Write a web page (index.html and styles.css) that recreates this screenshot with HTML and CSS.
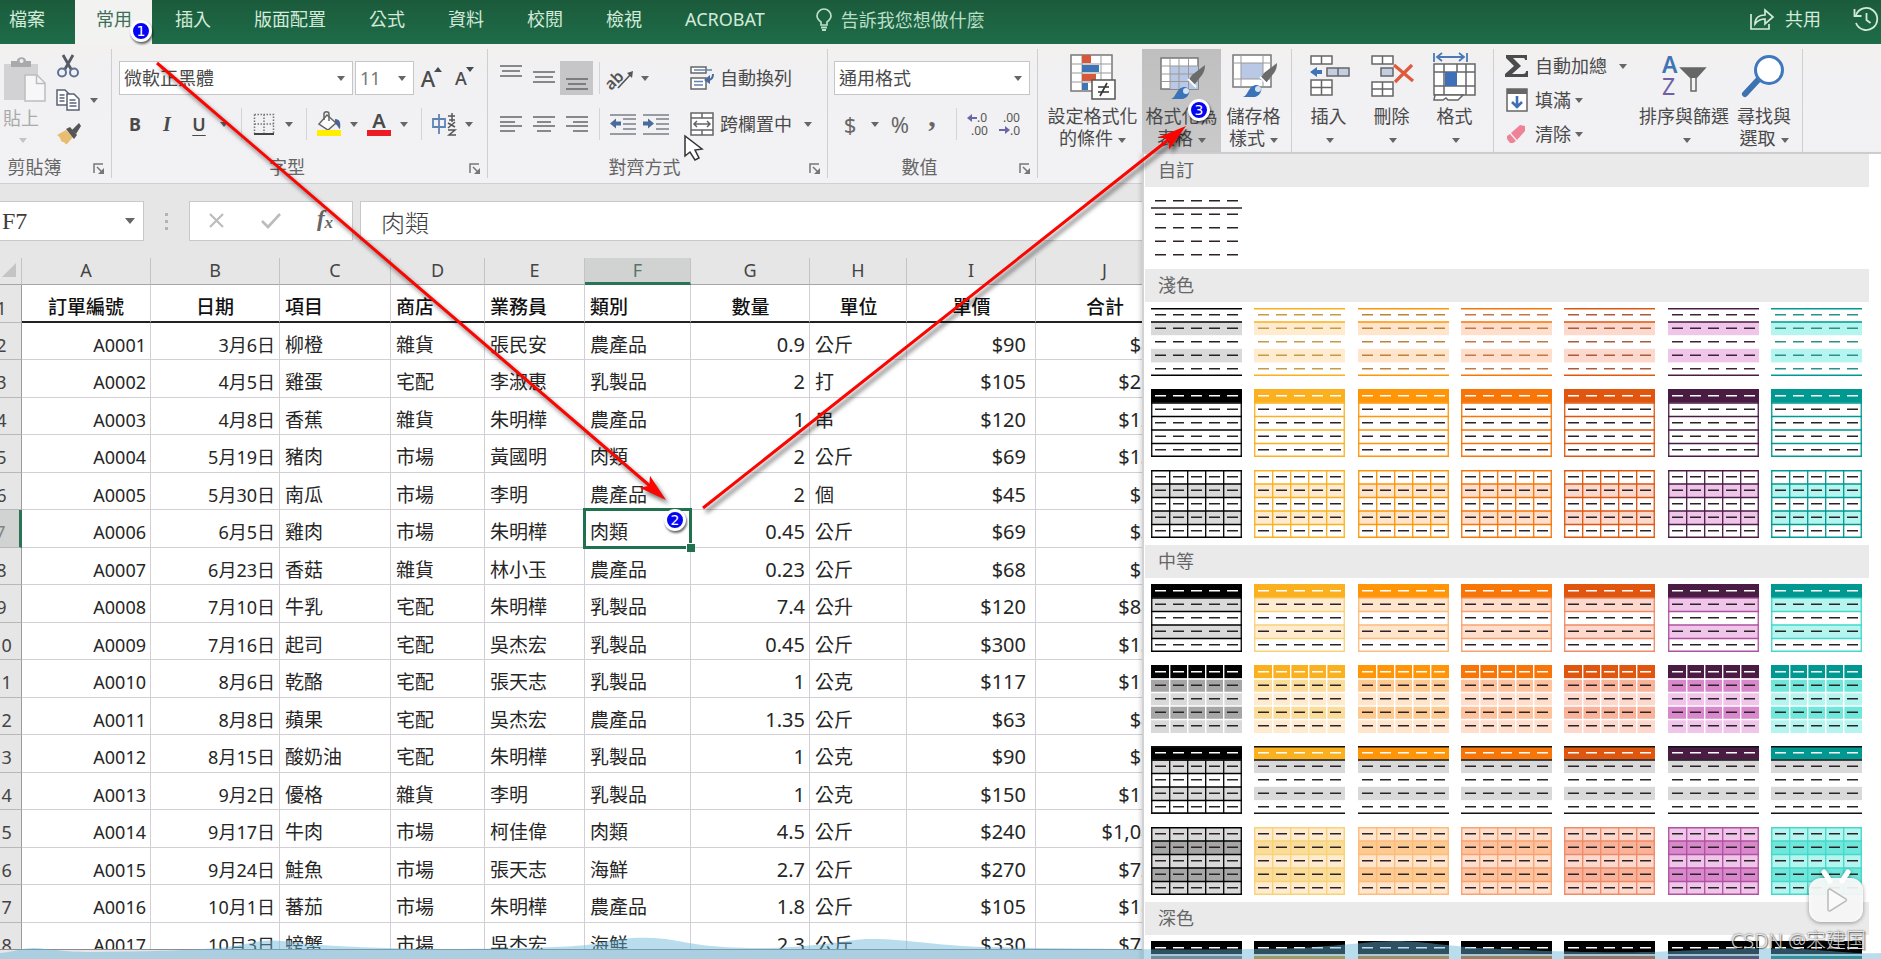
FILE: index.html
```html
<!DOCTYPE html>
<html lang="zh-Hant">
<head>
<meta charset="utf-8">
<title>格式化為表格</title>
<link rel="stylesheet" href="styles.css">
</head>
<body>
<header class="tabs">
  <nav class="tab-list" aria-label="功能區">
    <button class="tab file">檔案</button>
    <button class="tab active">常用</button>
    <button class="tab">插入</button>
    <button class="tab">版面配置</button>
    <button class="tab">公式</button>
    <button class="tab">資料</button>
    <button class="tab">校閱</button>
    <button class="tab">檢視</button>
    <button class="tab">ACROBAT</button>
  </nav>
  <button class="tell">
    <svg width="18" height="24" viewBox="0 0 18 24" fill="none" stroke="currentColor" stroke-width="1.7"><path d="M6 17v-3C3.500 12 2 10.500 2 8a7 7 0 0 1 14 0c0 2.500-1.500 4-4 6v3z"/><path d="M6 19.500h6M7 22h4" stroke-width="2"/></svg>
    告訴我您想做什麼</button>
  <button class="share">
    <svg width="26" height="24" viewBox="0 0 26 24" fill="none" stroke="currentColor" stroke-width="1.7"><path d="M2 7v15h18v-5"/><path d="M6 17c0-7 5-9 10-9V3l8 7-8 7v-5c-4 0-7 1-10 5z"/></svg>
    共用</button>
  <button class="history" aria-label="版本記錄">
    <svg width="26" height="26" viewBox="0 0 26 26" fill="none" stroke="currentColor" stroke-width="1.8"><path d="M3 9A11 11 0 1 1 3 17" /><path d="M1.500 3v7h7M13.500 7v7l4 3"/></svg>
  </button>
</header>

<div class="ribbon">
  <section class="group clipboard">
    <div class="content">
      <button class="paste">
        <svg width="46" height="50" viewBox="0 0 46 50"><path d="M4 8h34v16H26v20H4z" fill="#d2d1d3"/><path d="M11 5h6c0-5 9-5 9 0h5v6H11z" fill="#a9a8aa"/><circle cx="21.500" cy="5" r="2" fill="#f1f0f1"/><path d="M25 19h12l8 8v18H25z" fill="#f7f7f8" stroke="#bdbcbe" stroke-width="1.500"/><path d="M36.500 19v8.500H45" fill="none" stroke="#bdbcbe" stroke-width="1.500"/></svg>
        <span>貼上</span><i class="caret"></i>
      </button>
      <div class="stack">
        <button class="line" aria-label="剪下"><svg width="24" height="24" viewBox="0 0 24 24" fill="none"><path d="M7 1l8.500 15M17 1L8.500 16" stroke="#555b66" stroke-width="2.800"/><circle cx="6" cy="18.500" r="4" stroke="#5d7396" stroke-width="2"/><circle cx="18" cy="18.500" r="4" stroke="#5d7396" stroke-width="2"/></svg></button>
        <button class="line" aria-label="複製"><svg width="24" height="24" viewBox="0 0 24 24" fill="#fff" stroke="#596273" stroke-width="1.500"><path d="M1 2h8l4 4v11H1z"/><path d="M3.500 7h5M3.500 10h5M3.500 13h5"/><path d="M11 6h7l5 5v11H11z"/><path d="M13.500 12h6M13.500 15h7M13.500 18h7" /></svg><i class="caret gap"></i></button>
        <button class="line" aria-label="複製格式"><svg width="26" height="24" viewBox="0 0 26 24"><path d="M1 13l9-5 7 7-6 7c-2 1-2-2-4-2-3 0-1-4-6-7z" fill="#e9bd70"/><path d="M10 7l4-2 7 8-3 4z" fill="#555"/><path d="M16 8l7-7 2 3-5 8z" fill="#555"/></svg></button>
      </div>
    </div>
    <footer><span>剪貼簿</span><button class="launch" aria-label="剪貼簿選項"><svg width="12" height="12" viewBox="0 0 12 12"><path d="M1 10V1h9M4 4l6 6" fill="none" stroke="#777" stroke-width="1.500"/><path d="M11 5v6H5z" fill="#777"/></svg></button></footer>
  </section>

  <section class="group font">
    <div class="content rows">
      <div class="row">
        <label class="combo family"><select aria-label="字型"><option>微軟正黑體</option></select></label>
        <label class="combo size"><select aria-label="字型大小"><option>11</option></select></label>
        <button class="tool first grow" aria-label="放大字型">A<svg width="8" height="5" viewBox="0 0 8 5"><path d="M0 5l4-5 4 5z" fill="#444b57"/></svg></button>
        <button class="tool shrink" aria-label="縮小字型">A<svg width="8" height="5" viewBox="0 0 8 5"><path d="M0 0h8L4 5z" fill="#444b57"/></svg></button>
      </div>
      <div class="row">
        <button class="tool bold">B</button><button class="tool italic">I</button><button class="tool under">U</button><button class="drop" aria-label="底線選項"><i class="caret"></i></button>
        <span class="sep"></span>
        <button class="tool" aria-label="框線"><svg width="22" height="22" viewBox="0 0 22 22" fill="none" stroke="#777"><path d="M1.500 1.500h19v19M1.500 1.500v19M11 1.500v19M1.500 11h19" stroke-width="1.500" stroke-dasharray="1.500 1.500"/><path d="M1 21h20" stroke="#444" stroke-width="2"/></svg></button><button class="drop" aria-label="框線選項"><i class="caret"></i></button>
        <span class="sep"></span>
        <button class="tool" aria-label="填滿色彩"><svg width="26" height="26" viewBox="0 0 26 26"><path d="M11 4l9 8-8 7-9-6z" fill="#fff" stroke="#666" stroke-width="1.500"/><path d="M8 9V3c0-3 5-3 5 0v7" fill="none" stroke="#666" stroke-width="1.500"/><path d="M19 8c5 0 6 4 5 10-2-1-2-4-5-5z" fill="#4a6494"/><path d="M1 19h24v6H1z" fill="#ffee00"/></svg></button><button class="drop" aria-label="填滿色彩選項"><i class="caret"></i></button>
        <button class="tool color" aria-label="字型色彩">A</button><button class="drop" aria-label="字型色彩選項"><i class="caret"></i></button>
        <span class="sep"></span>
        <button class="tool" aria-label="注音標示"><svg width="26" height="24" viewBox="0 0 26 24" fill="none"><path d="M2 7h12v8H2zM8 2v20" stroke="#5f83b4" stroke-width="1.800"/><path d="M17 4h7M18 8h6M21 1v9M17 11l7 4M24 10l-7 6M17 18h7l-6 5h7" stroke="#555" stroke-width="1.500"/></svg></button><button class="drop" aria-label="注音選項"><i class="caret"></i></button>
      </div>
    </div>
    <footer><span>字型</span><button class="launch" aria-label="字型選項"><svg width="12" height="12" viewBox="0 0 12 12"><path d="M1 10V1h9M4 4l6 6" fill="none" stroke="#777" stroke-width="1.500"/><path d="M11 5v6H5z" fill="#777"/></svg></button></footer>
  </section>

  <section class="group align">
    <div class="content">
      <div class="rows aligners">
        <div class="row">
          <button class="tool wide" aria-label="靠上對齊"><svg width="22" height="34"><path d="M0 5h22M2 10h18M0 15h22" stroke="#666" stroke-width="1.500"/></svg></button>
          <button class="tool wide" aria-label="置中對齊"><svg width="22" height="34"><path d="M0 11h22M2 16h18M0 21h22" stroke="#666" stroke-width="1.500"/></svg></button>
          <button class="tool wide on" aria-label="靠下對齊"><svg width="22" height="34"><path d="M0 18h22M2 23h18M0 28h22" stroke="#666" stroke-width="1.500"/></svg></button>
          <span class="sep"></span>
          <button class="tool slant" aria-label="方向"><svg width="26" height="26" viewBox="0 0 26 26"><text x="-4" y="19" transform="rotate(-45 8 14)" font-family="Noto Sans" font-size="16" font-weight="600" fill="#555">ab</text><path d="M10 23L23 9" stroke="#555" stroke-width="1.600"/><path d="M25 6l-1 7-5-5z" fill="#555"/></svg></button><button class="drop" aria-label="方向選項"><i class="caret"></i></button>
        </div>
        <div class="row">
          <button class="tool wide" aria-label="靠左"><svg width="22" height="18"><path d="M0 2h22M0 7h15M0 11h22M0 16h15" stroke="#666" stroke-width="1.500"/></svg></button>
          <button class="tool wide" aria-label="置中"><svg width="22" height="18"><path d="M0 2h22M4 7h14M0 11h22M4 16h14" stroke="#666" stroke-width="1.500"/></svg></button>
          <button class="tool wide" aria-label="靠右"><svg width="22" height="18"><path d="M0 2h22M7 7h15M0 11h22M7 16h15" stroke="#666" stroke-width="1.500"/></svg></button>
          <span class="sep"></span>
          <button class="tool wide" aria-label="減少縮排"><svg width="26" height="22"><path d="M0 2h26M13 6h13M13 11h13M13 16h13M0 21h26" stroke="#7a7f88" stroke-width="1.500"/><path d="M0 10.500l6-5v3h5v4H6v3z" fill="#4a6c9c"/></svg></button>
          <button class="tool wide" aria-label="增加縮排"><svg width="26" height="22"><path d="M0 2h26M13 6h13M13 11h13M13 16h13M0 21h26" stroke="#7a7f88" stroke-width="1.500"/><path d="M11 10.500l-6-5v3H0v4h5v3z" fill="#4a6c9c"/></svg></button>
        </div>
      </div>
      <div class="rows merges">
        <button class="line"><svg width="24" height="24" viewBox="0 0 24 24" fill="none"><path d="M1 1h15v6H1zM1 12h15v11H1z" stroke="#666" stroke-width="1.500" fill="#fff"/><path d="M4 4h18M4 15.500h9M4 19h9" stroke="#5e82b2" stroke-width="1.600"/><path d="M23 8c0 4-2 6-5 6" stroke="#4a6c9c" stroke-width="2"/><path d="M14 14l6-5v9z" fill="#4a6c9c"/></svg><span>自動換列</span></button>
        <button class="line"><svg width="24" height="24" viewBox="0 0 24 24" fill="#fff" stroke="#666" stroke-width="1.500"><path d="M1 1h22v22H1zM1 6h22M1 18h22M12 1v5M12 18v5"/><path d="M4 12h16M7 9l-3 3 3 3M17 9l3 3-3 3" fill="none"/></svg><span>跨欄置中</span><i class="caret gap"></i></button>
      </div>
    </div>
    <footer><span>對齊方式</span><button class="launch" aria-label="對齊選項"><svg width="12" height="12" viewBox="0 0 12 12"><path d="M1 10V1h9M4 4l6 6" fill="none" stroke="#777" stroke-width="1.500"/><path d="M11 5v6H5z" fill="#777"/></svg></button></footer>
  </section>

  <section class="group number">
    <div class="content rows">
      <div class="row"><label class="combo format"><select aria-label="數值格式"><option>通用格式</option></select></label></div>
      <div class="row">
        <button class="tool sign">$</button><button class="drop" aria-label="會計格式"><i class="caret"></i></button>
        <button class="tool sign">%</button><button class="tool comma">,</button>
        <span class="sep"></span>
        <button class="tool decimal" aria-label="增加小數位數"><svg width="24" height="22" viewBox="0 0 24 22"><path d="M0 5l5-4v3h5v2H5v3z" fill="#6a66a8"/><text x="10" y="9" font-size="12">.0</text><text x="4" y="22" font-size="12">.00</text></svg></button>
        <button class="tool decimal" aria-label="減少小數位數"><svg width="24" height="22" viewBox="0 0 24 22"><path d="M11 17l-5-4v3H0v2h6v3z" fill="#6a66a8"/><text x="4" y="9" font-size="12">.00</text><text x="11" y="22" font-size="12">.0</text></svg></button>
      </div>
    </div>
    <footer><span>數值</span><button class="launch" aria-label="數值選項"><svg width="12" height="12" viewBox="0 0 12 12"><path d="M1 10V1h9M4 4l6 6" fill="none" stroke="#777" stroke-width="1.500"/><path d="M11 5v6H5z" fill="#777"/></svg></button></footer>
  </section>

  <section class="group styles">
    <button class="big conditional">
      <svg width="46" height="46" viewBox="0 0 46 46"><path d="M1 1h41v36H1z" fill="#fff" stroke="#777" stroke-width="1.500"/><path d="M12 1v36M31 1v36M1 10h41M1 19h41M1 28h41" stroke="#999"/><path d="M12 1h9v8h-9z" fill="#d8583a"/><path d="M12 11h17v7H12z" fill="#3f74b5"/><path d="M12 20h14v7H12z" fill="#d8583a"/><path d="M12 29h6v7h-6z" fill="#3f74b5"/><path d="M22 26h23v19H22z" fill="#fff" stroke="#555" stroke-width="1.500"/><path d="M28 33h11M28 38h11M37 29l-7 13" stroke="#333" stroke-width="1.600"/></svg>
      <span>設定格式化</span><span>的條件<i class="caret"></i></span></button>
    <button class="big table pressed">
      <svg width="46" height="46" viewBox="0 0 46 46"><path d="M2 4h37v31H2z" fill="#fff" stroke="#777" stroke-width="1.500"/><path d="M11 12h28v23H11z" fill="#b9c8e4"/><path d="M11 4v31M20 4v31M29.500 4v31M2 12h37M2 20h37M2 27.500h37" stroke="#999"/><path d="M29 27l4-6 13-10c0 4-1 7-3 10l-8 10z" fill="#6b6b6b"/><path d="M29 25l8 8" stroke="#fff" stroke-width="2"/><path d="M12 45c6-2 5-12 14-12 7 1 5 10-2 12z" fill="#3b73b9"/><circle cx="27" cy="37" r="3" fill="#d5e2f3"/></svg>
      <span>格式化為</span><span>表格<i class="caret"></i></span></button>
    <button class="big cell">
      <svg width="46" height="46" viewBox="0 0 46 46"><path d="M2 1h38v32H2z" fill="#fff" stroke="#777" stroke-width="1.500"/><path d="M10 9h22v16H10z" fill="#b9c8e4"/><path d="M10 1v32M32 1v32M2 9h38M2 25h38" stroke="#999"/><path d="M29 25l4-6 13-10c0 4-1 7-3 10l-8 10z" fill="#6b6b6b"/><path d="M29 23l8 8" stroke="#fff" stroke-width="2"/><path d="M12 43c6-2 5-12 14-12 7 1 5 10-2 12z" fill="#3b73b9"/><circle cx="27" cy="35" r="3" fill="#d5e2f3"/></svg>
      <span>儲存格</span><span>樣式<i class="caret"></i></span></button>
  </section>

  <section class="group cells">
    <button class="big">
      <svg width="44" height="46" viewBox="0 0 44 46" fill="#fff" stroke="#666" stroke-width="1.500"><path d="M4 2h21v8H4zM14.500 2v8M4 26h21v15H4zM14.500 26v15M4 33.500h21"/><path d="M20 14h22v8H20zM31 14v8" fill="#c3cee2"/><path d="M3 18l7-5v3h5v4h-5v3z" fill="#3f74b5" stroke="none"/></svg>
      <span>插入</span><span><i class="caret"></i></span></button>
    <button class="big">
      <svg width="48" height="46" viewBox="0 0 48 46" fill="#fff" stroke="#666" stroke-width="1.500"><path d="M4 2h21v8H4zM14.500 2v8M4 28h21v14H4zM14.500 28v14M4 35h21"/><path d="M13 14h12v8H13z" fill="#c3cee2"/><path d="M26 11l19 16M44 11L27 28" stroke="#dd5b3c" stroke-width="3.200" fill="none"/></svg>
      <span>刪除</span><span><i class="caret"></i></span></button>
    <button class="big">
      <svg width="46" height="50" viewBox="0 0 46 50" fill="#fff" stroke="#666" stroke-width="1.500"><path d="M2 12h41v31H2zM12 12v31M34 12v31M2 20h41M2 34h41M25 12v8"/><path d="M13 20h12v14H13z" fill="#3f6fb5" stroke="none"/><path d="M3 43h10l4 0h14l-5 5H16l-2-2-3 2H2z"/><path d="M2 1v9M35 1v9M5 5h27M10 1L5 5l5 4M27 1l5 4-5 4" fill="none" stroke="#4a79b5" stroke-width="1.800"/></svg>
      <span>格式</span><span><i class="caret"></i></span></button>
  </section>

  <section class="group editing">
    <div class="stack">
      <button class="line"><svg width="24" height="24" viewBox="0 0 24 24"><path d="M1 1h21v5h-2c0-2-1-2-3-2H8l8 8-9 8h11c2 0 3-1 3-3h2v6H0v-3l9-8-8-8z" fill="#4b4b4b"/></svg><span>自動加總</span><i class="caret gap"></i></button>
      <button class="line"><svg width="24" height="24" viewBox="0 0 24 24"><path d="M2 1h20v22H2z" fill="#fff" stroke="#666" stroke-width="1.500"/><path d="M2 1h20v5H2z" fill="#666"/><path d="M12 8v12M7 14l5 5 5-5" fill="none" stroke="#3f6fb5" stroke-width="2.600"/></svg><span>填滿</span><i class="caret"></i></button>
      <button class="line"><svg width="24" height="24" viewBox="0 0 24 24"><path d="M2 14l3-2 6 7-3 2H5l-3-4z" fill="#ee8296"/><path d="M6 11L15 3l5 1v5l-8 9z" fill="#ee8296"/></svg><span>清除</span><i class="caret"></i></button>
    </div>
    <button class="big sort">
      <svg width="46" height="46" viewBox="0 0 46 46"><text x="1" y="19" font-size="23" font-weight="600" fill="#3f74b5">A</text><text x="1" y="41" font-size="23" fill="#7060a5">Z</text><path d="M20 14h24l-9 10v13h-5V24z" fill="#f4f4f4" stroke="#666" stroke-width="1.500"/><path d="M20 14h24l-9 10h-5z" fill="#666"/></svg>
      <span>排序與篩選</span><span><i class="caret"></i></span></button>
    <button class="big find">
      <svg width="46" height="46" viewBox="0 0 46 46"><path d="M4 40l13-14" stroke="#3d72b0" stroke-width="6" stroke-linecap="round"/><circle cx="28" cy="16" r="13.500" fill="#fff" stroke="#3f78bd" stroke-width="3"/></svg>
      <span>尋找與</span><span>選取<i class="caret"></i></span></button>
  </section>
</div>

<div class="formula">
  <div class="name-box"><input value="F7" aria-label="名稱方塊"><i class="caret large"></i></div>
  <span class="grip"><i></i><i></i><i></i></span>
  <div class="actions">
    <button aria-label="取消"><svg width="18" height="16"><path d="M2 1l13 13M15 1L2 14" stroke="#bcbcbc" stroke-width="2.200"/></svg></button>
    <button aria-label="輸入"><svg width="20" height="16"><path d="M1 8l6 6L19 1" fill="none" stroke="#bcbcbc" stroke-width="2.600"/></svg></button>
    <button class="fx">f<sub>x</sub></button>
  </div>
  <input class="value" value="肉類" aria-label="資料編輯列">
</div>

<main class="sheet">
<table>
<colgroup><col class="w-n"><col class="w-a"><col class="w-a"><col class="w-c"><col class="w-d"><col class="w-e"><col class="w-f"><col class="w-g"><col class="w-h"><col class="w-a"><col class="w-j"></colgroup>
<thead><tr><th class="corner"><svg width="14" height="14"><path d="M14 0v14H0z" fill="#c4c4c4"/></svg></th><th>A</th><th>B</th><th>C</th><th>D</th><th>E</th><th class="picked">F</th><th>G</th><th>H</th><th>I</th><th>J</th></tr></thead>
<tbody>
<tr class="titles"><th>1</th><td>訂單編號</td><td>日期</td><td>項目</td><td>商店</td><td>業務員</td><td>類別</td><td>數量</td><td>單位</td><td>單價</td><td>合計</td></tr>
<tr><th>2</th><td>A0001</td><td>3月6日</td><td>柳橙</td><td>雜貨</td><td>張民安</td><td>農產品</td><td>0.9</td><td>公斤</td><td>$90</td><td>$81</td></tr>
<tr><th>3</th><td>A0002</td><td>4月5日</td><td>雞蛋</td><td>宅配</td><td>李淑惠</td><td>乳製品</td><td>2</td><td>打</td><td>$105</td><td>$210</td></tr>
<tr><th>4</th><td>A0003</td><td>4月8日</td><td>香蕉</td><td>雜貨</td><td>朱明樺</td><td>農產品</td><td>1</td><td>串</td><td>$120</td><td>$120</td></tr>
<tr><th>5</th><td>A0004</td><td>5月19日</td><td>豬肉</td><td>市場</td><td>黃國明</td><td>肉類</td><td>2</td><td>公斤</td><td>$69</td><td>$138</td></tr>
<tr><th>6</th><td>A0005</td><td>5月30日</td><td>南瓜</td><td>市場</td><td>李明</td><td>農產品</td><td>2</td><td>個</td><td>$45</td><td>$90</td></tr>
<tr><th class="picked">7</th><td>A0006</td><td>6月5日</td><td>雞肉</td><td>市場</td><td>朱明樺</td><td class="selected">肉類</td><td>0.45</td><td>公斤</td><td>$69</td><td>$31</td></tr>
<tr><th>8</th><td>A0007</td><td>6月23日</td><td>香菇</td><td>雜貨</td><td>林小玉</td><td>農產品</td><td>0.23</td><td>公斤</td><td>$68</td><td>$16</td></tr>
<tr><th>9</th><td>A0008</td><td>7月10日</td><td>牛乳</td><td>宅配</td><td>朱明樺</td><td>乳製品</td><td>7.4</td><td>公升</td><td>$120</td><td>$888</td></tr>
<tr><th>10</th><td>A0009</td><td>7月16日</td><td>起司</td><td>宅配</td><td>吳杰宏</td><td>乳製品</td><td>0.45</td><td>公斤</td><td>$300</td><td>$135</td></tr>
<tr><th>11</th><td>A0010</td><td>8月6日</td><td>乾酪</td><td>宅配</td><td>張天志</td><td>乳製品</td><td>1</td><td>公克</td><td>$117</td><td>$117</td></tr>
<tr><th>12</th><td>A0011</td><td>8月8日</td><td>蘋果</td><td>宅配</td><td>吳杰宏</td><td>農產品</td><td>1.35</td><td>公斤</td><td>$63</td><td>$85</td></tr>
<tr><th>13</th><td>A0012</td><td>8月15日</td><td>酸奶油</td><td>宅配</td><td>朱明樺</td><td>乳製品</td><td>1</td><td>公克</td><td>$90</td><td>$90</td></tr>
<tr><th>14</th><td>A0013</td><td>9月2日</td><td>優格</td><td>雜貨</td><td>李明</td><td>乳製品</td><td>1</td><td>公克</td><td>$150</td><td>$150</td></tr>
<tr><th>15</th><td>A0014</td><td>9月17日</td><td>牛肉</td><td>市場</td><td>柯佳偉</td><td>肉類</td><td>4.5</td><td>公斤</td><td>$240</td><td>$1,080</td></tr>
<tr><th>16</th><td>A0015</td><td>9月24日</td><td>鮭魚</td><td>市場</td><td>張天志</td><td>海鮮</td><td>2.7</td><td>公斤</td><td>$270</td><td>$729</td></tr>
<tr><th>17</th><td>A0016</td><td>10月1日</td><td>蕃茄</td><td>市場</td><td>朱明樺</td><td>農產品</td><td>1.8</td><td>公斤</td><td>$105</td><td>$189</td></tr>
<tr><th>18</th><td>A0017</td><td>10月3日</td><td>螃蟹</td><td>市場</td><td>吳杰宏</td><td>海鮮</td><td>2.3</td><td>公斤</td><td>$330</td><td>$759</td></tr>
</tbody>
</table>
</main>
<div class="status"></div>

<aside class="gallery" aria-label="表格樣式"></aside>

<svg class="wave" viewBox="0 0 1881 24" preserveAspectRatio="none" aria-hidden="true"><path d="M0 18C15 17 20 13 33 13S60 17 90 17C190 16 225 14 250 8C275 2 290 8 320 10S400 14 460 14C540 13 580 12 600 8C625 1 655 2 672 5S710 13 760 13S840 6 865 4C900 3 930 10 985 12C1090 14 1220 16 1300 13C1350 10 1370 6 1400 6C1440 8 1450 12 1500 14S1590 18 1650 17C1720 14 1760 12 1800 14S1850 19 1881 18V24H0Z"/></svg>

<svg class="marks" width="1240" height="560" viewBox="0 0 1240 560" aria-hidden="true">
  <path d="M685 136v20l5-4 5 8 4-2-4-8 7-1z" fill="#fff" stroke="#333" stroke-width="1.500"/>
  <g class="arrows">
    <path d="M157 63L650 486M703 508L1168 140" stroke="#fb0500" stroke-width="3"/>
    <path d="M0 0L-28 -8L-22 0L-28 8z" fill="#fb0500" transform="translate(666 500) rotate(40.600)"/>
    <path d="M0 0L-28 -8L-22 0L-28 8z" fill="#fb0500" transform="translate(1186 126) rotate(-38.400)"/>
  </g>
  <g class="pins">
    <circle cx="141" cy="31" r="9.500"/><text x="141" y="36">1</text>
    <circle cx="675" cy="520" r="9.500"/><text x="675" y="525">2</text>
    <circle cx="1199" cy="110" r="9.500"/><text x="1199" y="115">3</text>
  </g>
</svg>

<div class="brand">
  <svg width="60" height="56" viewBox="0 0 60 56"><path d="M18 3l6 9M42 3l-6 9" stroke="#fff" stroke-width="5" stroke-linecap="round"/><rect x="3" y="9" width="54" height="44" rx="12" fill="#fff" fill-opacity=".9"/><path d="M22 22v19c0 1 1 1 2 1l16-10c1-1 1-1 0-2L24 20c-1 0-2 0-2 2z" fill="#fafafa" stroke="#bbb" stroke-width="1.500"/></svg>
  <p>CSDN @宋建国</p>
</div>
<script src="gallery.js"></script>
</body>
</html>
```
FILE: styles.css
```css
* { box-sizing: border-box; }
body {
  margin: 0;
  height: 100vh;
  display: flex;
  flex-direction: column;
  overflow: hidden;
  position: relative;
  background: #e6e6e7;
  color: #4a4a4a;
  font: 18px/22px "Noto Sans", "Noto Sans CJK TC", sans-serif;
}
button, input, select { font: inherit; color: inherit; border: 0; padding: 0; background: none; }
svg { display: block; flex: none; overflow: visible; }

.tabs { display: flex; height: 44px; flex: none; background: linear-gradient(#1b5b3c, #1e6c49); color: #d3ead9; }
.tab-list { display: flex; gap: 2px; }
.tab { padding: 0 20px 6px 21px; }
.tab.file { padding: 0 28px 6px 9px; }
.tab.active { background: #f2f2f0; color: #3d6e58; }
.tell { display: flex; align-items: center; gap: 8px; margin-left: 30px; padding-bottom: 4px; color: #b9dfc6; }
.share { display: flex; align-items: center; gap: 10px; margin-left: auto; padding-bottom: 6px; }
.history { margin: 0 2px 6px 32px; }

.ribbon { display: flex; flex: none; height: 140px; padding: 5px 0; background: linear-gradient(#f3f1ef, #f1f0f2 20%, #f2f2f4); border-bottom: 1px solid #d0d0d2; }
.group { flex: none; display: flex; flex-direction: column; border-right: 1px solid #cfced0; }
.group footer { position: relative; flex: 1; display: flex; align-items: center; justify-content: center; padding: 2px 32px 0 0; color: #666; }
.launch { position: absolute; right: 6px; top: 9px; }
.content { height: 108px; display: flex; }
.rows { display: flex; flex-direction: column; padding-top: 12px; gap: 12px; }
.row { display: flex; align-items: center; height: 34px; }
.caret { display: inline-block; flex: none; width: 8px; border: 4px solid transparent; border-top: 5px solid #666; border-bottom: 0; vertical-align: middle; }
.caret.large { width: 10px; border-width: 6px 5px 0; }
.stack { display: flex; flex-direction: column; }
.line { display: flex; align-items: center; gap: 6px; height: 34px; }
.line .caret { margin-left: -2px; }
.line .caret.gap { margin-left: 6px; }

.clipboard { width: 112px; }
.group.clipboard footer { padding-right: 42px; }
.clipboard .stack { margin-left: 10px; }
.clipboard .line .caret.gap { margin-left: 4px; }
.paste { width: 46px; display: flex; flex-direction: column; align-items: center; padding-top: 7px; color: #aaa; }
.paste .caret { border-top-color: #c4c4c4; margin-top: 9px; }
.paste span { padding-top: 1px; margin-right: 4px; }

.font { width: 376px; padding-left: 7px; }
.combo { position: relative; height: 34px; background: #fff; border: 1px solid #c6c6c8; }
.combo::after { content: ""; position: absolute; right: 7px; top: 14px; border: 4px solid transparent; border-top: 5px solid #666; border-bottom: 0; }
.combo select { appearance: none; width: 100%; height: 100%; padding: 0 4px; outline: 0; }
.family { width: 234px; }
.size { width: 59px; margin-left: 2px; color: #777; }
.format { width: 196px; }
.tool { width: 32px; height: 34px; flex: none; display: flex; align-items: center; justify-content: center; }
.tool.wide { width: 33px; }
.tool.on { background: #c6c6c8; }
.drop { width: 18px; height: 34px; flex: none; display: flex; align-items: center; justify-content: center; }
.sep { width: 1px; height: 32px; margin: 0 6px 0 8px; background: #d4d4d6; }
.grow, .shrink { width: 33px; align-items: center; font-weight: 500; }
.grow { font-size: 22px; }
.grow svg, .shrink svg { margin: 0 -2px 18px -1px; }
.bold { font-weight: 700; }
.italic { font: italic 700 20px "Liberation Serif", serif; }
.under { font-weight: 600; text-decoration: underline; text-underline-offset: 4px; }
.color { font-size: 20px; font-weight: 600; line-height: 20px; width: 24px; height: 24px; margin: 0 4px; border-bottom: 6px solid #ec1c24; }

.align { width: 340px; padding-left: 6px; }
.aligners { width: 186px; }
.align .sep { margin: 0 6px; }
.slant { width: 30px; }
.merges { margin-left: 10px; }
.merges .gap { margin-left: 6px; }

.number { width: 210px; padding-left: 6px; }
.sign { font-size: 22px; color: #666; }
.comma { font: 700 30px/20px "Liberation Serif", serif; padding-bottom: 16px; color: #666; }
.decimal { fill: #555; }

.styles, .cells, .editing { flex-direction: row; padding-left: 5px; }
.big { height: 104px; display: grid; grid-template-rows: 56px 22px 22px; align-content: start; justify-items: center; align-items: center; }
.big span { white-space: nowrap; }
.big .caret { margin-left: 6px; }
.big span .caret:only-child { margin-left: 5px; }
.cells .big span .caret, .sort span .caret { margin-left: 2px; }
.conditional { width: 99px; }
.pressed { width: 79px; background: linear-gradient(#bfbfc0, #cacacb); }
.cell { width: 65px; }
.styles { width: 254px; }
.cells { width: 202px; }
.cells .big { width: 63px; }
.editing { width: 309px; padding-left: 11px; }
.editing .stack { width: 131px; }
.sort { width: 96px; }
.find { width: 64px; }

.formula { display: flex; flex: none; padding: 17px 0; height: 74px; color: #3d3d3d; }
.name-box { width: 144px; display: flex; align-items: center; background: #fff; border: 1px solid #c9c9cb; border-left: 0; }
.name-box input { width: 125px; padding-left: 2px; font: 24px "Liberation Serif", serif; }
.grip { width: 45px; display: flex; flex-direction: column; align-items: center; justify-content: center; gap: 4px; }
.grip i { width: 3px; height: 3px; background: #b4b4b4; }
.actions { width: 164px; display: grid; grid-template-columns: repeat(3, 1fr); justify-items: center; align-items: center; background: #fff; border: 1px solid #c9c9cb; }
.actions .fx { font: italic 700 23px/24px "Liberation Serif", serif; color: #666; }
.fx sub { font-size: 17px; vertical-align: -2px; }
.value { flex: 1; min-width: 0; margin-left: 7px; padding-left: 20px; font-size: 24px; font-weight: 300; background: #fff; border: 1px solid #c9c9cb; }

.sheet { flex: 1; overflow: hidden; min-height: 0; background: #fff; }
table { table-layout: fixed; width: 1192px; margin-left: -18px; border-spacing: 0; color: #262626; }
.w-n { width: 40px; } .w-a { width: 129px; } .w-c { width: 111px; } .w-d { width: 94px; } .w-e { width: 100px; }
.w-f { width: 106px; } .w-g { width: 119px; } .w-h { width: 97px; } .w-j { width: 138px; }
th, td { padding: 0; white-space: nowrap; }
thead th { height: 27px; padding-bottom: 2px; line-height: 22px; font-weight: 400; color: #444; background: #e6e6e7; border-right: 1px solid #c4c4c6; border-bottom: 1px solid #a5a5a7; }
thead .corner svg { margin: 0 5px 0 auto; }
thead .picked { background: #d1d2d2; color: #587468; padding-bottom: 0; border-bottom: 3px solid #2b7355; }
tbody td, tbody th { height: 37px; line-height: 24px; padding: 10px 4px 2px; border-right: 1px solid #d2d0d4; border-bottom: 1px solid #d2d0d4; }
tbody tr:nth-child(odd):not(.titles) > * { height: 38px; padding-bottom: 3px; }
tbody th { font-weight: 400; color: #444; background: #e6e6e7; border-right-color: #9b9b9d; border-bottom-color: #b8b8ba; }
tbody th.picked { background: #d1d2d2; color: #808583; border-right: 3px solid #2b7355; }
td { font-size: 19px; text-align: left; }
td:nth-child(n+4) { padding-left: 5px; }
td:nth-child(2), td:nth-child(3) { text-align: right; font-size: 18px; }
td:nth-child(8) { text-align: right; font-size: 20px; }
td:nth-child(10), td:nth-child(11) { text-align: right; font-size: 20px; padding-right: 9px; }
.titles td { font-size: 19px; font-weight: 500; color: #111; border-bottom: 2px solid #222; }
.titles td:nth-child(2), .titles td:nth-child(3), .titles td:nth-child(n+8) { text-align: center; font-size: 19px; padding-right: 4px; }
.selected { position: relative; }
.selected::before { content: ""; position: absolute; inset: -2px; border: 3px solid #217050; }
.selected::after { content: ""; position: absolute; right: -5px; bottom: -5px; width: 8px; height: 8px; background: #217050; border: 1px solid #fff; border-width: 1px 0 0 1px; }
.status { flex: none; height: 10px; border-top: 1px solid #8c8c8e; background: #e6e6e7; }

.gallery { position: absolute; left: 1142px; right: 0; top: 152px; bottom: 0; overflow: hidden; background: #fff; border-left: 2px solid #d2d2d4; border-top: 2px solid #cdcdcf; padding: 0 12px 0 1px; box-shadow: -2px 2px 4px #0002; }
.gallery h2 { margin: 0; height: 33px; padding-left: 13px; font-size: 18px; line-height: 32px; font-weight: 400; color: #666; background: #eaeaeb; }
.swatches { display: grid; grid-template-columns: repeat(7, 91px); justify-content: space-between; row-gap: 13px; padding: 7px 7px 7px 6px; }
.swatches button { height: 68px; }
.gallery h2:nth-of-type(n+2) + .swatches { padding-top: 6px; }

.wave { position: absolute; left: 0; bottom: 0; width: 100%; height: 24px; fill: rgb(99 180 215 / .45); }
.marks { position: absolute; left: 0; top: 0; pointer-events: none; }
.arrows { fill: none; filter: drop-shadow(3px 4px 2px #0008); }
.pins circle { fill: #0505f5; stroke: #fff; stroke-width: 3px; filter: drop-shadow(1px 2px 1px #0009); }
.pins text { fill: #fff; font: 14px "DejaVu Sans", sans-serif; text-anchor: middle; }
.brand { position: absolute; right: 15px; bottom: 6px; display: flex; flex-direction: column; align-items: flex-end; }
.brand svg { filter: drop-shadow(0 1px 2px #0006); }
.brand p { margin: 4px 0 0; font: 300 20px/24px "Noto Sans", "Noto Sans CJK SC", sans-serif; color: #ffffffd0; text-shadow: 0 0 2px #000b, 1px 1px 1px #0007; }
```
FILE: gallery.js
```js
const colors = [
  { name: "黑", main: "#000", dash: "#222", line: "#000", soft: "#d9d9d9", strong: "#a6a6a6", deep: "#737373" },
  { name: "金", main: "#fbb11f", dash: "#c59b46", line: "#f8d277", soft: "#ffecd0", strong: "#fadd9b", deep: "#c58a10" },
  { name: "橘黃", main: "#ff9507", dash: "#bf8238", line: "#fdbb7c", soft: "#ffe5cb", strong: "#fdcb92", deep: "#c87410" },
  { name: "橘", main: "#f87508", dash: "#c27847", line: "#f8a272", soft: "#ffdfcc", strong: "#fec29d", deep: "#c25c10" },
  { name: "紅橘", main: "#e0560f", dash: "#ac5a3c", line: "#f08a66", soft: "#fcd8cd", strong: "#f9b39b", deep: "#ad4414" },
  { name: "紫", main: "#4a1c43", dash: "#3d2238", line: "#b0529f", soft: "#efc5ea", strong: "#d988cc", deep: "#3d1838" },
  { name: "青", main: "#009992", dash: "#2c9089", line: "#45d8cb", soft: "#b4f6ef", strong: "#70e7db", deep: "#007a75" }
];
const xs = [0.75, 18.7, 36.7, 54.7, 72.7, 90.25];
const ys = [0.75, 14, 27.5, 41, 54.5, 67.25];

const band = (row, fill) => `<rect x="0" y="${row * 13.6}" width="91" height="13.6" fill="${fill}"/>`;
const across = (list, stroke, width = 1.3) => list.map(i => `<path d="M0 ${ys[i]}H91" stroke="${stroke}" stroke-width="${width}"/>`).join("");
const down = (list, stroke, width = 1.3) => list.map(i => `<path d="M${xs[i]} 0V68" stroke="${stroke}" stroke-width="${width}"/>`).join("");
const dashes = (head, rest) => [0, 1, 2, 3, 4].map(r =>
  `<path d="M4 ${6.75 + r * 13.5}H90" stroke="${r ? rest : head}" stroke-width="1.6" stroke-dasharray="11 7"/>`).join("");
const bands = (a, b) => band(1, a) + band(2, b) + band(3, a) + band(4, b);
const all = [0, 1, 2, 3, 4, 5];
const ink = "#2a2226";

const kinds = {
  custom: c => across([1], ink) + dashes(ink, ink),
  light1: c => band(1, c.soft) + band(3, c.soft) + across([0, 1, 5], c.main) + dashes(c.dash, c.dash),
  light2: c => band(0, c.main) + across(all, c.main) + down([0, 5], c.main) + dashes("#fff", ink),
  light3: c => band(1, c.soft) + band(3, c.soft) + across(all, c.main) + down(all, c.main) + dashes(ink, ink),
  medium1: c => bands(c.soft, "#fff") + across(all, c.line) + down([0, 5], c.line) + band(0, c.main) + dashes("#fff", ink),
  medium2: c => band(0, c.main) + bands(c.strong, c.soft) + across([1, 2, 3, 4], "#fff", 1.6) + down([1, 2, 3, 4], "#fff", 1.4) + dashes("#fff", ink),
  medium3: c => bands("#d9d9d9", "#fff") + (c.main === "#000" ? across(all, "#000") + down(all, "#000") : "") +
    band(0, c.main) + across([0, 1, 5], "#111", 1.6) + dashes("#fff", ink),
  medium4: c => band(0, c.soft) + bands(c.strong, c.soft) + across(all, c.line) + down(all, c.line) + dashes(ink, ink),
  dark1: c => band(0, "#000") + bands(c.deep, c.main) + across([1], "#fff", 1.5) + dashes("#fff", "#fff")
};
const sections = [["自訂", ["custom"]], ["淺色", ["light1", "light2", "light3"]],
  ["中等", ["medium1", "medium2", "medium3", "medium4"]], ["深色", ["dark1"]]];

document.querySelector(".gallery").innerHTML = sections.map(([title, rows]) =>
  `<h2>${title}</h2><div class="swatches">` + rows.map(kind =>
    (kind === "custom" ? colors.slice(0, 1) : colors).map(c =>
      `<button aria-label="${title} ${c.name}"><svg width="91" height="68" viewBox="0 0 91 68">${kinds[kind](c)}</svg></button>`
    ).join("")).join("") + "</div>").join("");
```
